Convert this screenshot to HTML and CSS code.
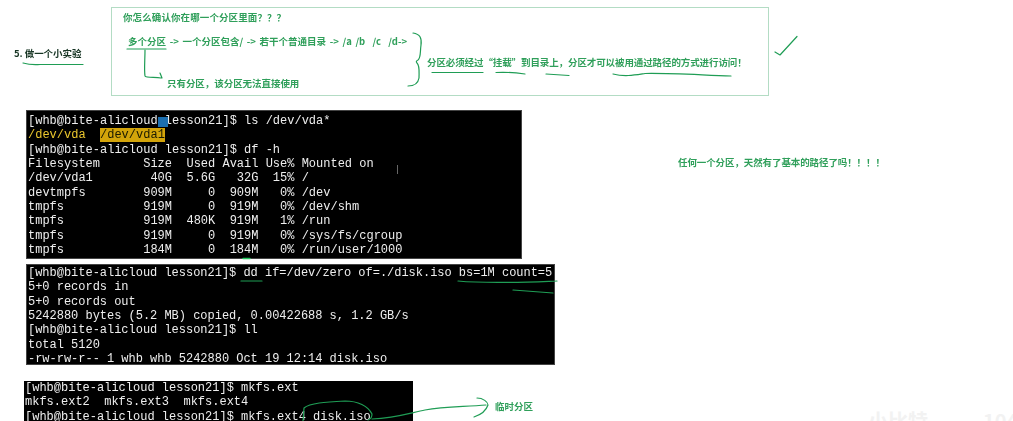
FILE: index.html
```html
<!DOCTYPE html>
<html lang="zh">
<head>
<meta charset="utf-8">
<title>做一个小实验</title>
<link rel="stylesheet" href="styles.css">
</head>
<body>
<main class="canvas">
  <h2 class="note heading">5. 做一个小实验</h2>

  <section class="note box">
    <p class="note q">你怎么确认你在哪一个分区里面？？？</p>
    <p class="note chain">多个分区 -&gt; 一个分区包含/ -&gt; 若干个普通目录 -&gt; /a /b &nbsp;/c &nbsp;/d-&gt;</p>
    <p class="note only">只有分区，该分区无法直接使用</p>
    <p class="note must">分区必须经过“挂载”到目录上，分区才可以被用通过路径的方式进行访问！</p>
  </section>

  <p class="note side">任何一个分区，天然有了基本的路径了吗！！！！</p>

  <pre class="term t1">[whb@bite-alicloud lesson21]$ ls /dev/vda*
<span class="yl">/dev/vda</span>  <span class="hl">/dev/vda1</span>
[whb@bite-alicloud lesson21]$ df -h
Filesystem      Size  Used Avail Use% Mounted on
/dev/vda1        40G  5.6G   32G  15% /
devtmpfs        909M     0  909M   0% /dev
tmpfs           919M     0  919M   0% /dev/shm
tmpfs           919M  480K  919M   1% /run
tmpfs           919M     0  919M   0% /sys/fs/cgroup
tmpfs           184M     0  184M   0% /run/user/1000</pre>

  <pre class="term t2">[whb@bite-alicloud lesson21]$ dd if=/dev/zero of=./disk.iso bs=1M count=5
5+0 records in
5+0 records out
5242880 bytes (5.2 MB) copied, 0.00422688 s, 1.2 GB/s
[whb@bite-alicloud lesson21]$ ll
total 5120
-rw-rw-r-- 1 whb whb 5242880 Oct 19 12:14 disk.iso</pre>

  <pre class="term t3">[whb@bite-alicloud lesson21]$ mkfs.ext
mkfs.ext2  mkfs.ext3  mkfs.ext4
[whb@bite-alicloud lesson21]$ mkfs.ext4 disk.iso</pre>

  <p class="note temp">临时分区</p>

  <svg class="ink" viewBox="0 0 1013 421" aria-hidden="true">
    <g class="pen">
      <path d="M23 63C30 65 34 65 40 64.500L83 64.500"/>
      <path d="M127 49H166"/>
      <path d="M145 50C145 60 144 70 145 76C146 78 155 77 161 78M160 73L162 78"/>
      <path d="M413 33C420 34 422 38 421 45C420 52 421 58 418 60C416 61 416 62 417 63C420 66 419 72 419 78C418 84 414 86 408 86"/>
      <path d="M432 72.500H483M496 72.500C504 72 518 73 525 74M546 74L569 75.500M613 74C625 77 635 75 645 73.500C670 73 700 75 731 76"/>
      <path d="M775 52L780 55L797 36.500"/>
      <path d="M241 281L262 281"/>
      <path d="M458 281C490 284 530 282 557 281M513 290L553 293"/>
      <path d="M303 421L304 408C310 403 325 402 345 401C358 401 368 406 372 414C372 417 371 419 368 420"/>
      <path d="M372 419C395 418 410 413 425 410C445 406 465 407 486 405"/>
      <path d="M477 398C483 398 488 402 488 405C486 411 480 415 474 417"/>
      <path class="tick" d="M243 258.500H250"/>
    </g>
  </svg>

  <div class="cursor-block"></div>
  <div class="ibeam"></div>
  <p class="wm">小比特<span class="wm-num">104</span></p>
</main>
</body>
</html>
```
FILE: styles.css
```css
html, body {
  margin: 0;
  background: #fff;
}

.canvas {
  position: relative;
  width: 1013px;
  height: 421px;
  overflow: hidden;
  background: #fff;
}

.note {
  position: absolute;
  margin: 0;
  white-space: nowrap;
  font-family: "Noto Sans CJK SC", "Liberation Sans", sans-serif;
  font-size: 9.5px;
  line-height: 12px;
  font-weight: 700;
  color: #2f9f5a;
  filter: blur(0.3px);
}

.heading {
  left: 14px;
  top: 47px;
  color: #173524;
  letter-spacing: -0.05px;
}

.box {
  left: 111px;
  top: 7px;
  width: 656px;
  height: 87px;
  border: 1px solid #b3dcc4;
  filter: none;
}

.q { left: 11px; top: 3px; letter-spacing: 0.1px; }
.chain { left: 16px; top: 27px; word-spacing: 1.5px; }
.only { left: 55px; top: 69px; letter-spacing: -0.05px; }
.must { left: 315px; top: 48px; letter-spacing: -0.1px; }
.side { left: 678px; top: 156px; letter-spacing: -0.1px; }
.temp { left: 495px; top: 400px; }

.term {
  position: absolute;
  margin: 0;
  background: #000;
  color: #eee;
  font-family: "Liberation Mono", monospace;
  font-size: 12px;
  line-height: 14.35px;
  box-sizing: border-box;
  overflow: hidden;
  border: 1px solid #444;
  filter: blur(0.25px);
}

.t1 { left: 26px; top: 110px; width: 496px; height: 149px; padding: 3px 0 0 1px; }
.t2 { left: 26px; top: 264px; width: 529px; height: 101px; padding: 1px 0 0 1px; letter-spacing: -0.02px; }
.t3 { left: 24px; top: 381px; width: 389px; height: 40px; padding: 0 0 0 1px; border: 0; }

.yl { color: #ecc82e; }
.hl { background: #d3a40a; color: #1a1a00; }

.ink {
  position: absolute;
  left: 0;
  top: 0;
  width: 1013px;
  height: 421px;
  pointer-events: none;
}

.pen {
  fill: none;
  stroke: #1f9d55;
  stroke-width: 1.2;
  stroke-linecap: round;
  stroke-linejoin: round;
}

.tick { stroke: #22c55e; stroke-width: 1.5; }

.cursor-block {
  position: absolute;
  left: 158px;
  top: 117px;
  width: 10px;
  height: 10px;
  background: #1c6fb0;
}

.ibeam {
  position: absolute;
  left: 397px;
  top: 165px;
  width: 1px;
  height: 9px;
  background: #666;
}

.wm {
  position: absolute;
  left: 868px;
  top: 408px;
  margin: 0;
  white-space: nowrap;
  font-family: "Noto Sans CJK SC", sans-serif;
  font-size: 20px;
  line-height: 26px;
  font-weight: 700;
  color: #f2f2f2;
}

.wm-num { margin-left: 55px; }
```
